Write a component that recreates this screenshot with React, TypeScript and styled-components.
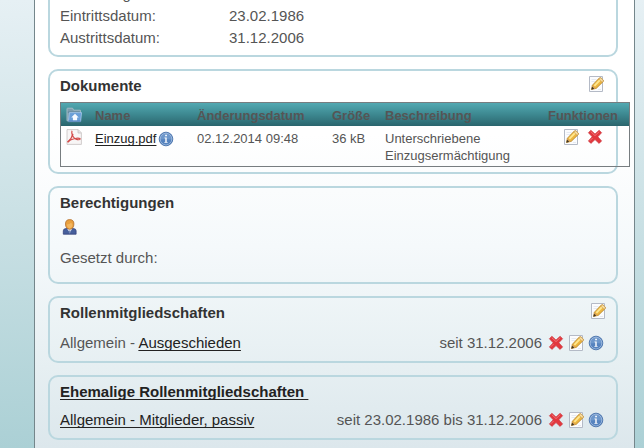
import React from "react";
import styled, { createGlobalStyle, css } from "styled-components";

const GlobalStyle = createGlobalStyle`
  * { box-sizing: border-box; }
  body {
    margin: 0;
    color: #555;
    font: 15px/20px "Liberation Sans", Arial, sans-serif;
  }
`;

const Page = styled.div`
  display: flex;
  min-height: 100vh;
  overflow: hidden;
  padding: 0 9px 0 34px;
  background: linear-gradient(#e6f0f4, #c9e0e4 50%, #abd0d5);
`;

const Panel = styled.main`
  flex: 1;
  min-width: 0;
  display: flex;
  flex-direction: column;
  gap: 12px;
  padding: 0 16px 8px 13px;
  border: solid #74868b;
  border-width: 0 1px;
  background: linear-gradient(#fff, #fff 30%, #f5f9fb 55%, #e6eff2 82%, #dce7ec);
`;

const Card = styled.section<{ $scrolled?: boolean; $bottom: number }>`
  padding: 5px 10px ${(p) => p.$bottom}px;
  border: 2px solid #bad7df;
  border-radius: 10px;
  ${(p) => p.$scrolled && css`margin-top: -24px;`}
`;

const CardHeader = styled.header<{ $inset?: boolean }>`
  display: flex;
  justify-content: space-between;
  align-items: flex-start;
  height: 20px;
  padding-right: ${(p) => (p.$inset ? 2 : 0)}px;
`;

const Title = styled.h2`
  margin: 0;
  color: #333;
  font-size: 15px;
  line-height: 20px;
  white-space: pre;
`;

const Link = styled.a`
  color: #222;
  text-decoration: underline 1px;
  text-underline-offset: 2px;
  text-decoration-skip-ink: none;
`;

const Facts = styled.dl`
  display: grid;
  grid-template-columns: 169px 1fr;
  margin: 0;
  line-height: 22px;
  dd { margin: 0; }
`;

const IconButton = styled.button`
  display: block;
  width: 16px;
  height: 16px;
  padding: 0;
  border: 0;
  background: none;
  cursor: pointer;
  svg { display: block; }
`;

const DocTable = styled.table`
  width: calc(100% + 24px);
  margin-top: 6px;
  table-layout: fixed;
  border: 1px solid #777d80;
  border-spacing: 0;
  font-size: 13px;
  line-height: 17px;
  thead { background: linear-gradient(#52a9b2, #3d8890 50%, #2a656d); }
`;

const Th = styled.th<{ $width?: number; $center?: boolean }>`
  width: ${(p) => (p.$width ? `${p.$width}px` : "auto")};
  height: 23px;
  padding: ${(p) => (p.$center ? "2px 10px 0 5px" : "2px 0 0 5px")};
  text-align: ${(p) => (p.$center ? "center" : "left")};

  &:first-child { padding-top: 0; }
`;

const Td = styled.td<{ $center?: boolean }>`
  padding: ${(p) => (p.$center ? "3px 10px 2px 5px" : "4px 0 2px 5px")};
  vertical-align: top;

  &:first-child { padding-top: 3px; }
`;

const Inline = styled.span<{ $gap: number; $center?: boolean }>`
  display: flex;
  align-items: center;
  justify-content: ${(p) => (p.$center ? "center" : "flex-start")};
  gap: ${(p) => p.$gap}px;
`;

const Rights = styled.div`
  display: grid;
  gap: 13px;
  padding-top: 6px;
`;

const RoleRow = styled.div<{ $gap: number }>`
  display: flex;
  justify-content: space-between;
  margin-top: ${(p) => p.$gap}px;
  padding-right: 2px;
`;

const Period = styled.span`
  margin-right: 2px;
`;

const EditIcon = () => (
  <svg width="16" height="16" viewBox="0 0 16 16">
    <path d="M1.5.5h13v15h-13z" fill="#fbfcfe" stroke="#b4bac6" />
    <path d="M3.5 3.5h5M3.5 5.5h4M10 13.5h3" stroke="#e6eaf1" />
    <path d="M3.5 13.4 4.4 9.2 11.2 2.1q1-.9 2 0l1.9 1.8q.8.9 0 1.8L8.2 12.4z" fill="#edb640" stroke="#b5862e" strokeWidth=".8" />
    <path d="m5.8 9.2 5.6-5.9 1.4 1.2-5.8 5.9z" fill="#ffe88f" />
    <path d="m10.9 3.1.8-.9q.8-.6 1.5 0l1.8 1.7q.6.7 0 1.5l-.9.9z" fill="#f6dba0" stroke="#c79c55" strokeWidth=".6" />
    <path d="m4.5 9.4 1.3.6.2 1.2 1.4.3.5.9-4.1 1.1z" fill="#d9a257" />
    <path d="m3.3 13.7.8-3 2.1 2.1z" fill="#3f3524" />
  </svg>
);

const DeleteIcon = () => (
  <svg width="16" height="16" viewBox="0 0 16 16">
    <path d="M3.9 1.3 8 5.1l4.1-3.8 2.5 2.4-3.8 4.1 3.8 4.1-2.5 2.5L8 10.6l-4.1 3.8-2.5-2.5 3.8-4.1-3.8-4.1z" fill="#e2383e" stroke="#cc3a40" strokeWidth=".7" strokeLinejoin="round" />
    <path d="m3.7 2.6 4.3 4 4.3-4M2.8 11.8l2.8-2.8" fill="none" stroke="#f07276" strokeWidth="1" />
  </svg>
);

const InfoIcon = () => (
  <svg width="16" height="16" viewBox="0 0 16 16">
    <circle cx="8" cy="8" r="6.8" fill="#4e7ab5" stroke="#5079b0" />
    <circle cx="8" cy="8" r="5.8" fill="#6d97cb" stroke="#a9c3e3" strokeWidth=".8" />
    <path d="M2.7 8.6Q8 7.2 13.3 8.6 12.6 13.2 8 13.4 3.4 13.2 2.7 8.6z" fill="#5583bf" />
    <path d="M7.2 3.7h1.7v1.5H7.2zM6.5 6.4h2.2v4.5h.9v.8H6.4v-.8h.9V7.3h-.8z" fill="#fff" />
  </svg>
);

const FolderIcon = () => (
  <svg width="16" height="16" viewBox="0 0 16 16">
    <path d="M1 13.8V1.8q0-.6.6-.6h5l1 2h6.8v10.6z" fill="#7d9dae" stroke="#a9bfca" strokeWidth=".9" />
    <path d="M1.8 4.6h12v1H1.8z" fill="#557f98" />
    <path d="M3.4 5.6h12.2l-1 9H2.4z" fill="#6a9fd8" stroke="#a6c6e8" strokeWidth=".8" />
    <path d="M2.2 14.2h12.5" stroke="#3e6da9" strokeWidth=".8" />
    <path d="m9 6.8 3.7 3.6h-1.6v2.8H6.9v-2.8H5.3z" fill="#f6faff" />
  </svg>
);

const PdfIcon = () => (
  <svg width="16" height="16" viewBox="0 0 16 16">
    <path d="M1 .6h11.2l3.2 3.2v11.6H1z" fill="#f8f6f6" stroke="#c6c2c2" strokeWidth=".8" />
    <path d="M12 .8v3.2h3.2" fill="#e4e1e1" stroke="#c6c2c2" strokeWidth=".8" />
    <path d="M6 1.8q-.9 1.8.7 5.1" fill="none" stroke="#d96461" strokeWidth="1.4" />
    <path d="M6.9 4.8q-.8 4.3-5.3 8.5" fill="none" stroke="#d34b49" strokeWidth="1.3" />
    <path d="M6.5 6.8q1.9 3.4 4.8 3.8 2.6.4 3-.7-1.5-1.4-6.1-.2Q3.8 10.6 1.6 13.1" fill="none" stroke="#d34b49" strokeWidth="1.1" />
  </svg>
);

const UserIcon = () => (
  <svg width="18" height="16" viewBox="0 0 18 16">
    <path d="M3.3 15.2v-3.4q0-2 2.4-2.2h8q2.4.2 2.4 2.2v3.4z" fill="#465f9c" stroke="#37447c" strokeWidth=".8" />
    <path d="m7.1 9.8 2.6 3.8 2.6-3.8z" fill="#dfe6f2" />
    <path d="M9.2 11.4h1l.4 2.4-.9 1-.9-1z" fill="#7686b2" />
    <path d="M9.7.6q4.2 0 4.2 4.4 0 4.9-4.2 5.3-4.2-.4-4.2-5.3Q5.5.6 9.7.6z" fill="#e9a03e" stroke="#b26f2e" strokeWidth=".8" />
    <path d="M6.9 5.6q2.6-.2 4.2-1.8l1.3 1.6q0 3.5-2.7 4-2.6-.5-2.8-3.8z" fill="#f3b65f" />
  </svg>
);

const Edit = () => <IconButton aria-label="Bearbeiten"><EditIcon /></IconButton>;
const Delete = () => <IconButton aria-label="Löschen"><DeleteIcon /></IconButton>;
const Info = () => <IconButton aria-label="Information"><InfoIcon /></IconButton>;

function Membership({ gap, period, children }: { gap: number; period: string; children: React.ReactNode }) {
  return (
    <RoleRow $gap={gap}>
      <span>{children}</span>
      <Inline $gap={4}>
        <Period>{period}</Period>
        <Delete />
        <Edit />
        <Info />
      </Inline>
    </RoleRow>
  );
}

export default function App() {
  return (
    <Page>
      <GlobalStyle />
      <Panel>
        <Card $scrolled $bottom={6}>
          <Facts>
            <dt>Beziehung:</dt>
            <dd />
            <dt>Eintrittsdatum:</dt>
            <dd>23.02.1986</dd>
            <dt>Austrittsdatum:</dt>
            <dd>31.12.2006</dd>
          </Facts>
        </Card>

        <Card $bottom={5}>
          <CardHeader $inset>
            <Title>Dokumente</Title>
            <Edit />
          </CardHeader>
          <DocTable>
            <thead>
              <tr>
                <Th $width={29}><IconButton aria-label="Übergeordneter Ordner"><FolderIcon /></IconButton></Th>
                <Th $width={102}>Name</Th>
                <Th $width={135}>Änderungsdatum</Th>
                <Th $width={53}>Größe</Th>
                <Th $width={162}>Beschreibung</Th>
                <Th $center>Funktionen</Th>
              </tr>
            </thead>
            <tbody>
              <tr>
                <Td><PdfIcon /></Td>
                <Td><Inline $gap={2}><Link href="#einzug">Einzug.pdf</Link><Info /></Inline></Td>
                <Td>02.12.2014 09:48</Td>
                <Td>36 kB</Td>
                <Td>Unterschriebene<br />Einzugsermächtigung</Td>
                <Td $center><Inline $gap={8} $center><Edit /><Delete /></Inline></Td>
              </tr>
            </tbody>
          </DocTable>
        </Card>

        <Card $bottom={14}>
          <Title>Berechtigungen</Title>
          <Rights>
            <UserIcon />
            <span>Gesetzt durch:</span>
          </Rights>
        </Card>

        <Card $bottom={8}>
          <CardHeader>
            <Title>Rollenmitgliedschaften</Title>
            <Edit />
          </CardHeader>
          <Membership gap={10} period="seit 31.12.2006">
            Allgemein - <Link href="#ausgeschieden">Ausgeschieden</Link>
          </Membership>
        </Card>

        <Card $bottom={8}>
          <Title><Link href="#ehemalige">{"Ehemalige Rollenmitgliedschaften "}</Link></Title>
          <Membership gap={8} period="seit 23.02.1986 bis 31.12.2006">
            <Link href="#passiv">Allgemein - Mitglieder, passiv</Link>
          </Membership>
        </Card>
      </Panel>
    </Page>
  );
}
